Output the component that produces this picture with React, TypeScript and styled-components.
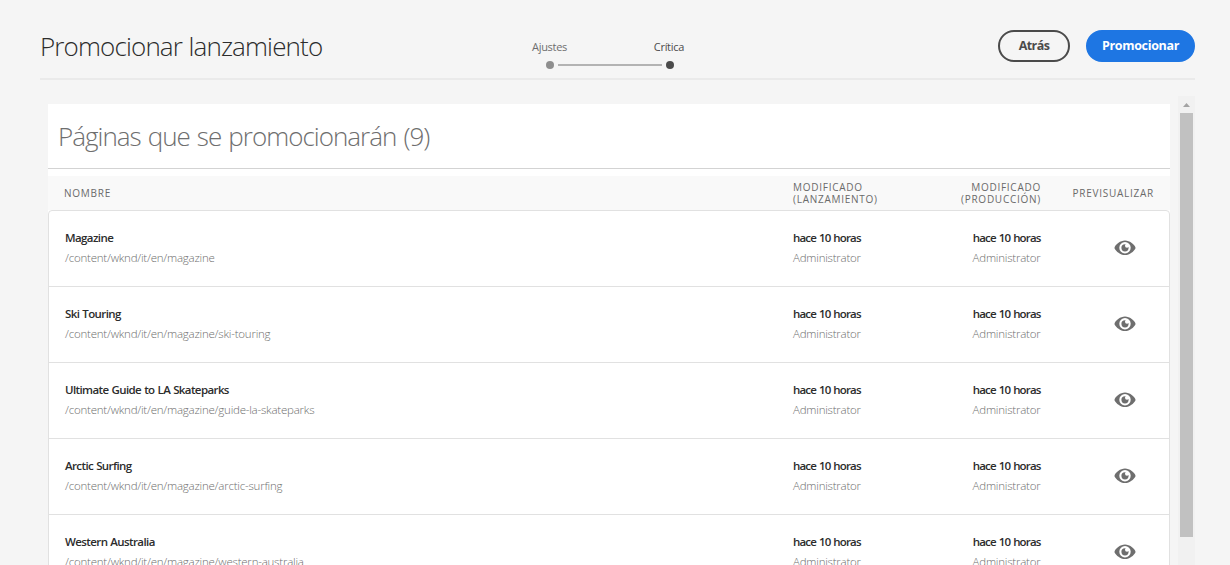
import React from 'react';
import styled, { createGlobalStyle } from 'styled-components';

const GlobalStyle = createGlobalStyle`
  * { box-sizing: border-box; }
  body {
    margin: 0;
    background: #f5f5f5;
    overflow: hidden;
    font-family: "Open Sans", "Noto Sans", sans-serif;
    font-size: 11.5px;
    color: #2c2c2c;
  }
`;

const Page = styled.div`
  height: 565px;
  padding: 0 35px 0 40px;
  display: flex;
  flex-direction: column;
  overflow: hidden;
`;

const Toolbar = styled.header`
  flex: none;
  height: 80px;
  display: grid;
  grid-template-columns: 492px 1fr auto;
  align-items: start;
  border-bottom: 2px solid #eaeaea;
`;

const Title = styled.h1`
  margin: 28px 0 0;
  font-size: 26px;
  line-height: 36px;
  font-weight: 300;
  letter-spacing: -0.86px;
  word-spacing: 0.6px;
  white-space: nowrap;
`;

const Steps = styled.div`
  display: flex;
  flex-direction: column;
  width: 152px;
  padding-top: 38px;
`;

const StepLabels = styled.div`
  display: flex;
  justify-content: space-between;
`;

const StepLabel = styled.span<{ $active?: boolean }>`
  font-size: 11px;
  line-height: 18px;
  letter-spacing: -0.3px;
  color: ${(p) => (p.$active ? '#4b4b4b' : '#6e6e6e')};
`;

const StepTrack = styled.div`
  display: flex;
  align-items: center;
  gap: 4px;
  margin: 5px 10px 0 14px;
`;

const StepDot = styled.i<{ $active?: boolean }>`
  width: 8px;
  height: 8px;
  border-radius: 50%;
  background: ${(p) => (p.$active ? '#4b4b4b' : '#8e8e8e')};
`;

const StepLine = styled.i`
  flex: 1;
  height: 2px;
  background: #b3b3b3;
`;

const Actions = styled.div`
  display: flex;
  gap: 16px;
  padding-top: 30px;
`;

const Button = styled.button<{ $primary?: boolean }>`
  height: 32px;
  width: ${(p) => (p.$primary ? '109px' : '72px')};
  padding: 0 0 2px;
  border: 2px solid ${(p) => (p.$primary ? '#1e76e3' : '#4b4b4b')};
  border-radius: 16px;
  background: ${(p) => (p.$primary ? '#1e76e3' : 'transparent')};
  color: ${(p) => (p.$primary ? '#fff' : '#4b4b4b')};
  font: 700 12.5px "Open Sans", sans-serif;
  letter-spacing: ${(p) => (p.$primary ? '-0.34px' : '-0.6px')};
`;

const Body = styled.div`
  flex: 1;
  min-height: 0;
  margin-top: 16px;
  display: flex;
  justify-content: space-between;
`;

const Panel = styled.main`
  width: 1122px;
  margin: 8px 0 0 8px;
  background: #fff;
  overflow: hidden;
`;

const PanelTitle = styled.h2`
  margin: 0 0 7px;
  height: 65px;
  padding: 14px 10px 0;
  border-bottom: 1px solid #d3d3d3;
  font-size: 26px;
  line-height: 36px;
  font-weight: 300;
  letter-spacing: -0.98px;
  word-spacing: 1.2px;
  color: #6e6e6e;
`;

const TableHead = styled.div`
  display: grid;
  grid-template-columns: 729px 160px 88px 1fr;
  align-items: center;
  height: 34px;
  padding: 0 16px;
  background: #f9f9f9;
`;

const HeadCell = styled.span<{ $right?: boolean }>`
  justify-self: ${(p) => (p.$right ? 'end' : 'start')};
  text-align: ${(p) => (p.$right ? 'right' : 'left')};
  font-size: 10px;
  line-height: 12px;
  letter-spacing: 0.74px;
  color: #6a6a6a;
  text-transform: uppercase;
  white-space: pre;
`;

const Rows = styled.div`
  border: 1px solid #e1e1e1;
  border-radius: 4px 4px 0 0;
  background: #fff;
`;

const Row = styled.div`
  display: grid;
  grid-template-columns: 728px 160px 87.500px 1fr;
  height: 76px;
  padding: 17px 16px 0;
  border-bottom: 1px solid #e1e1e1;
`;

const Cell = styled.div<{ $right?: boolean }>`
  display: flex;
  flex-direction: column;
  align-items: ${(p) => (p.$right ? 'flex-end' : 'flex-start')};
  white-space: nowrap;
`;

const Strong = styled.span<{ $time?: boolean }>`
  font-weight: 600;
  line-height: 20px;
  letter-spacing: ${(p) => (p.$time ? '-0.84px' : '-0.6px')};
  word-spacing: ${(p) => (p.$time ? '0.8px' : '0.6px')};
`;

const Muted = styled.span`
  font-weight: 300;
  line-height: 20px;
  letter-spacing: -0.22px;
  color: #6e6e6e;
`;

const PreviewCell = styled.div`
  justify-self: end;
  padding: 12px 17px 0 0;
`;

const EyeSvg = styled.svg`
  display: block;
  width: 22px;
  height: 16px;
`;

const Scrollbar = styled.div`
  width: 17px;
  display: flex;
  flex-direction: column;
  align-items: center;
  background: #f1f1f1;
`;

const ScrollArrow = styled.svg`
  display: block;
  width: 17px;
  height: 17px;
`;

const ScrollThumb = styled.div`
  width: 13px;
  height: 424px;
  background: #c1c1c1;
`;

function Eye() {
  return (
    <EyeSvg viewBox="0 0 22 16">
      <path
        fillRule="evenodd"
        fill="#6e6e6e"
        d="M11 .6C6.100.6 2.200 4.400.7 6.900c-.3.6-.3 1.200 0 1.800C2.200 11.300 6.100 15 11 15s8.800-3.700 10.300-6.300c.3-.6.3-1.200 0-1.800C19.800 4.400 15.900.6 11 .6Zm0 1.500a5.700 5.700 0 1 1 0 11.400A5.700 5.700 0 0 1 11 2.100Z"
      />
      <path fill="#6e6e6e" d="M11 4.200A3.600 3.600 0 1 0 14.600 7.800c0-.3 0-.5-.1-.8a1.900 1.900 0 0 1-1.500.8A2 2 0 0 1 11 5.800c0-.6.3-1.100.7-1.500A3 3 0 0 0 11 4.200Z" />
    </EyeSvg>
  );
}

const pages = [
  { name: 'Magazine', path: '/content/wknd/it/en/magazine' },
  { name: 'Ski Touring', path: '/content/wknd/it/en/magazine/ski-touring' },
  { name: 'Ultimate Guide to LA Skateparks', path: '/content/wknd/it/en/magazine/guide-la-skateparks' },
  { name: 'Arctic Surfing', path: '/content/wknd/it/en/magazine/arctic-surfing' },
  { name: 'Western Australia', path: '/content/wknd/it/en/magazine/western-australia' },
];

function Modified({ right }: { right?: boolean }) {
  return (
    <Cell $right={right}>
      <Strong $time>hace 10 horas</Strong>
      <Muted>Administrator</Muted>
    </Cell>
  );
}

export default function App() {
  return (
    <Page>
      <GlobalStyle />
      <Toolbar>
        <Title>Promocionar lanzamiento</Title>
        <Steps>
          <StepLabels>
            <StepLabel>Ajustes</StepLabel>
            <StepLabel $active>Crítica</StepLabel>
          </StepLabels>
          <StepTrack>
            <StepDot />
            <StepLine />
            <StepDot $active />
          </StepTrack>
        </Steps>
        <Actions>
          <Button>Atrás</Button>
          <Button $primary>Promocionar</Button>
        </Actions>
      </Toolbar>
      <Body>
        <Panel>
          <PanelTitle>Páginas que se promocionarán (9)</PanelTitle>
          <TableHead>
            <HeadCell>Nombre</HeadCell>
            <HeadCell>{'Modificado\n(lanzamiento)'}</HeadCell>
            <HeadCell $right>{'Modificado\n(producción)'}</HeadCell>
            <HeadCell $right>Previsualizar</HeadCell>
          </TableHead>
          <Rows>
            {pages.map((page) => (
              <Row key={page.name}>
                <Cell>
                  <Strong>{page.name}</Strong>
                  <Muted>{page.path}</Muted>
                </Cell>
                <Modified />
                <Modified right />
                <PreviewCell>
                  <Eye />
                </PreviewCell>
              </Row>
            ))}
          </Rows>
        </Panel>
        <Scrollbar>
          <ScrollArrow viewBox="0 0 17 17">
            <path fill="#a3a3a3" d="M5 11h7L8.500 7Z" />
          </ScrollArrow>
          <ScrollThumb />
        </Scrollbar>
      </Body>
    </Page>
  );
}
